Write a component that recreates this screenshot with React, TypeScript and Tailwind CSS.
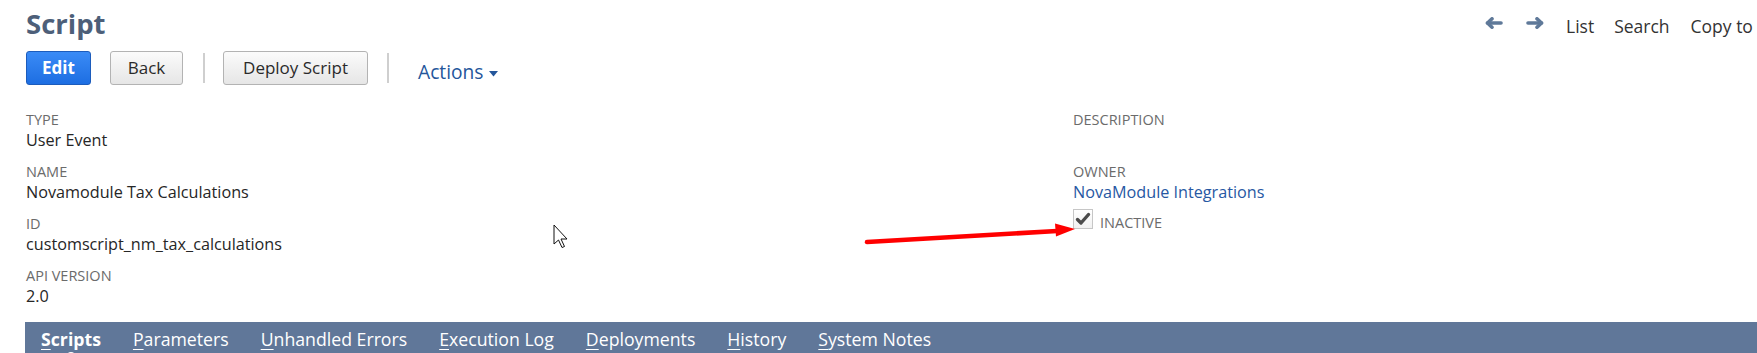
const leftFields = [
  { label: "Type", value: "User Event" },
  { label: "Name", value: "Novamodule Tax Calculations" },
  { label: "ID", value: "customscript_nm_tax_calculations" },
  { label: "API Version", value: "2.0" },
];

const tabs = [
  "Scripts",
  "Parameters",
  "Unhandled Errors",
  "Execution Log",
  "Deployments",
  "History",
  "System Notes",
];

function Field({
  label,
  value,
  link,
  last,
}: {
  label: string;
  value?: string;
  link?: boolean;
  last?: boolean;
}) {
  return (
    <div className={last ? "mb-[6px]" : "mb-[12px]"}>
      <div className="text-[14.5px] uppercase leading-[18px] text-[#6b6b6b]">{label}</div>
      <div
        className={
          "mt-[1px] min-h-[21px] text-[16.2px] leading-[21px] " +
          (link ? "text-[#2758a3]" : "text-[#262626]")
        }
      >
        {value}
      </div>
    </div>
  );
}

function NavArrow({ dir }: { dir: "left" | "right" }) {
  return (
    <svg
      width="18"
      height="12"
      viewBox="0 0 18 12"
      className={"mt-[3px] shrink-0 " + (dir === "right" ? "-scale-x-100" : "")}
      aria-hidden="true"
    >
      <g stroke="#5f7999" strokeWidth="3.6" strokeLinecap="round" strokeLinejoin="round" fill="none">
        <path d="M2.5 6 H16" />
        <path d="M7 1.8 L2.5 6 L7 10.2" />
      </g>
    </svg>
  );
}

function Button({
  children,
  primary,
  className,
}: {
  children: string;
  primary?: boolean;
  className?: string;
}) {
  return (
    <button
      className={
        "flex h-[34px] items-center justify-center rounded-[3px] border text-[17px] " +
        (primary
          ? "border-[#1c5cbc] bg-gradient-to-b from-[#3a8bf6] to-[#1d6ee2] font-bold text-white "
          : "border-[#b3b3b3] bg-gradient-to-b from-[#fbfbfb] to-[#e6e6e6] font-medium text-[#2a2a2a] ") +
        (className ?? "")
      }
    >
      {children}
    </button>
  );
}

export default function App() {
  return (
    <div className="relative h-[353px] w-[1757px] overflow-hidden bg-white font-['Open_Sans',sans-serif]">
      <div className="flex pl-[26px]">
        <div className="flex-1">
          <h1 className="pt-[7px] text-[27.5px] font-bold leading-[34px] text-[#4d5f79]">Script</h1>
          <div className="mt-[10px] flex items-start">
            <Button primary className="w-[65px]">
              Edit
            </Button>
            <Button className="ml-[19px] w-[73px]">Back</Button>
            <div className="ml-[20px] mt-[2px] h-[30px] w-[2px] bg-[#cfcfcf]" />
            <Button className="ml-[18px] w-[145px]">Deploy Script</Button>
            <div className="ml-[19px] mt-[2px] h-[30px] w-[2px] bg-[#cfcfcf]" />
            <div className="ml-[29px] mt-[8px] flex items-center text-[19.2px] leading-[26px] text-[#24569b]">
              Actions
              <svg width="9" height="6" viewBox="0 0 9 6" className="ml-[6px] mt-[3px]" aria-hidden="true">
                <path d="M0 0 H9 L4.5 5.5 Z" fill="#24569b" />
              </svg>
            </div>
          </div>
        </div>
        <nav className="flex w-[272px] shrink-0 items-start overflow-hidden whitespace-nowrap pt-[14px] text-[17.5px] leading-[24px] text-[#333]">
          <NavArrow dir="left" />
          <span className="ml-[23px] flex shrink-0">
            <NavArrow dir="right" />
          </span>
          <span className="ml-[22px] shrink-0">List</span>
          <span className="ml-[20px] shrink-0">Search</span>
          <span className="ml-[21px] shrink-0">Copy to Account</span>
        </nav>
      </div>

      <div className="mt-[26px] grid grid-cols-[1047px_1fr] pl-[26px]">
        <div>
          {leftFields.map((f) => (
            <Field key={f.label} label={f.label} value={f.value} />
          ))}
        </div>
        <div>
          <Field label="Description" />
          <Field label="Owner" value="NovaModule Integrations" link last />
          <div className="flex items-start">
            <span className="flex h-[20px] w-[20px] items-center justify-center border border-[#c6c6c6] bg-gradient-to-b from-white to-[#f1f1f1]">
              <svg width="16" height="14" viewBox="0 0 16 14" aria-hidden="true">
                <path
                  d="M2.5 7.5 L6 11 L13.5 2.5"
                  fill="none"
                  stroke="#4b4b4b"
                  strokeWidth="3.4"
                  strokeLinecap="round"
                  strokeLinejoin="round"
                />
              </svg>
            </span>
            <span className="ml-[7px] mt-[5px] text-[14.5px] leading-[18px] text-[#6b6b6b]">INACTIVE</span>
          </div>
        </div>
      </div>

      <div className="ml-[25px] mt-[3px] flex h-[31px] bg-[#607799] text-[17.7px] text-white">
        {tabs.map((t, i) => (
          <span
            key={t}
            className={"relative px-[16px] pt-[5px] leading-[24px] " + (i === 0 ? "font-bold" : "")}
          >
            <u className="underline-offset-[3px]">{t[0]}</u>
            {t.slice(1)}
            {i === 0 && (
              <span className="absolute bottom-[-3px] left-1/2 h-[4px] w-[8px] -translate-x-1/2 rounded-t-full bg-white" />
            )}
          </span>
        ))}
      </div>

      {/* annotation arrow */}
      <svg
        className="pointer-events-none absolute left-[860px] top-[215px]"
        width="220"
        height="35"
        viewBox="0 0 220 35"
        aria-hidden="true"
      >
        <path d="M7 27 L197 16" stroke="#ff0000" strokeWidth="4.5" strokeLinecap="round" />
        <path d="M215 14 L195 8.5 L196 21.5 Z" fill="#ff0000" />
      </svg>

      {/* mouse pointer */}
      <svg
        className="pointer-events-none absolute left-[553px] top-[224px]"
        width="16"
        height="25"
        viewBox="0 0 16 25"
        aria-hidden="true"
      >
        <path
          d="M1 1 V20 L5.5 16 L9 23.5 L11.5 22.5 L8 15 H14 Z"
          fill="white"
          stroke="#111"
          strokeWidth="1"
          strokeLinejoin="round"
        />
      </svg>
    </div>
  );
}
